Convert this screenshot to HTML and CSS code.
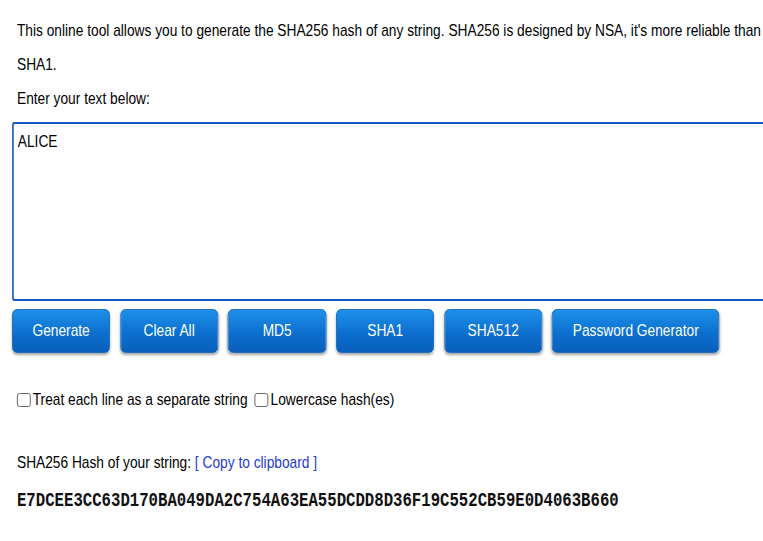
FILE: index.html
```html
<!DOCTYPE html>
<html>
<head>
<meta charset="utf-8">
<link rel="stylesheet" href="styles.css">
</head>
<body>
<div class="page">
  <p class="intro">This online tool allows you to generate the SHA256 hash of any string. SHA256 is designed by NSA, it's more reliable than SHA1.</p>
  <p class="label">Enter your text below:</p>
  <textarea class="input">ALICE</textarea>
  <div class="buttons">
    <button class="btn">Generate</button>
    <button class="btn">Clear All</button>
    <button class="btn">MD5</button>
    <button class="btn">SHA1</button>
    <button class="btn">SHA512</button>
    <button class="btn btn-wide">Password Generator</button>
  </div>
  <div class="options">
    <label class="opt"><input type="checkbox" class="cb"><span>Treat each line as a separate string</span></label>
    <label class="opt"><input type="checkbox" class="cb"><span>Lowercase hash(es)</span></label>
  </div>
  <p class="result-label">SHA256 Hash of your string: <a class="copy" href="#">[ Copy to clipboard ]</a></p>
  <p class="hash">E7DCEE3CC63D170BA049DA2C754A63EA55DCDD8D36F19C552CB59E0D4063B660</p>
</div>
</body>
</html>
```
FILE: styles.css
```css
html, body {
  margin: 0;
  padding: 0;
  overflow: hidden;
  background: #ffffff;
}

.page {
  width: 944px;
  padding: 14px 0 0 15px;
  box-sizing: border-box;
  transform: scaleX(0.808);
  transform-origin: 0 0;
  font-family: "Liberation Sans", Arial, sans-serif;
  font-size: 17px;
  color: #000000;
}

.intro, .label {
  margin: 0 0 0 6px;
  line-height: 34px;
  width: 925px;
}

.input {
  display: block;
  margin-top: 6px;
  width: 1000px;
  height: 179px;
  box-sizing: border-box;
  border: 2px solid #1658c6;
  border-radius: 3px;
  padding: 8px 5px;
  font-family: "Liberation Sans", Arial, sans-serif;
  font-size: 17px;
  line-height: 19px;
  color: #000000;
  resize: none;
  outline: none;
}

.buttons {
  display: flex;
  gap: 12.4px;
  margin-top: 8px;
}

.btn {
  width: 121.3px;
  height: 44px;
  border: 1px solid #0b5fb4;
  border-radius: 6px;
  background: linear-gradient(to bottom, #1e90ea 0%, #0c6fcf 55%, #0a60bb 100%);
  color: #ffffff;
  font-family: "Liberation Sans", Arial, sans-serif;
  font-size: 17px;
  padding: 0;
  box-shadow: 0 2px 3px rgba(0, 0, 0, 0.35);
}

.btn-wide {
  width: 206.7px;
}

.options {
  display: flex;
  gap: 9px;
  margin: 37px 0 0 6px;
  line-height: 20px;
}

.opt {
  display: flex;
  align-items: center;
  gap: 3px;
}

.cb {
  appearance: none;
  -webkit-appearance: none;
  margin: 0;
  width: 16.5px;
  height: 14px;
  border: 1px solid #5a5a5a;
  border-radius: 3px;
  background: #ffffff;
}

.result-label {
  margin: 43px 0 0 6px;
  line-height: 20px;
}

.copy {
  color: #1f3ad3;
  text-decoration: none;
}

.hash {
  margin: 16px 0 0 6px;
  font-family: "Liberation Mono", "Courier New", monospace;
  font-weight: bold;
  font-size: 19.4px;
  line-height: 24px;
  color: #111111;
}
```
